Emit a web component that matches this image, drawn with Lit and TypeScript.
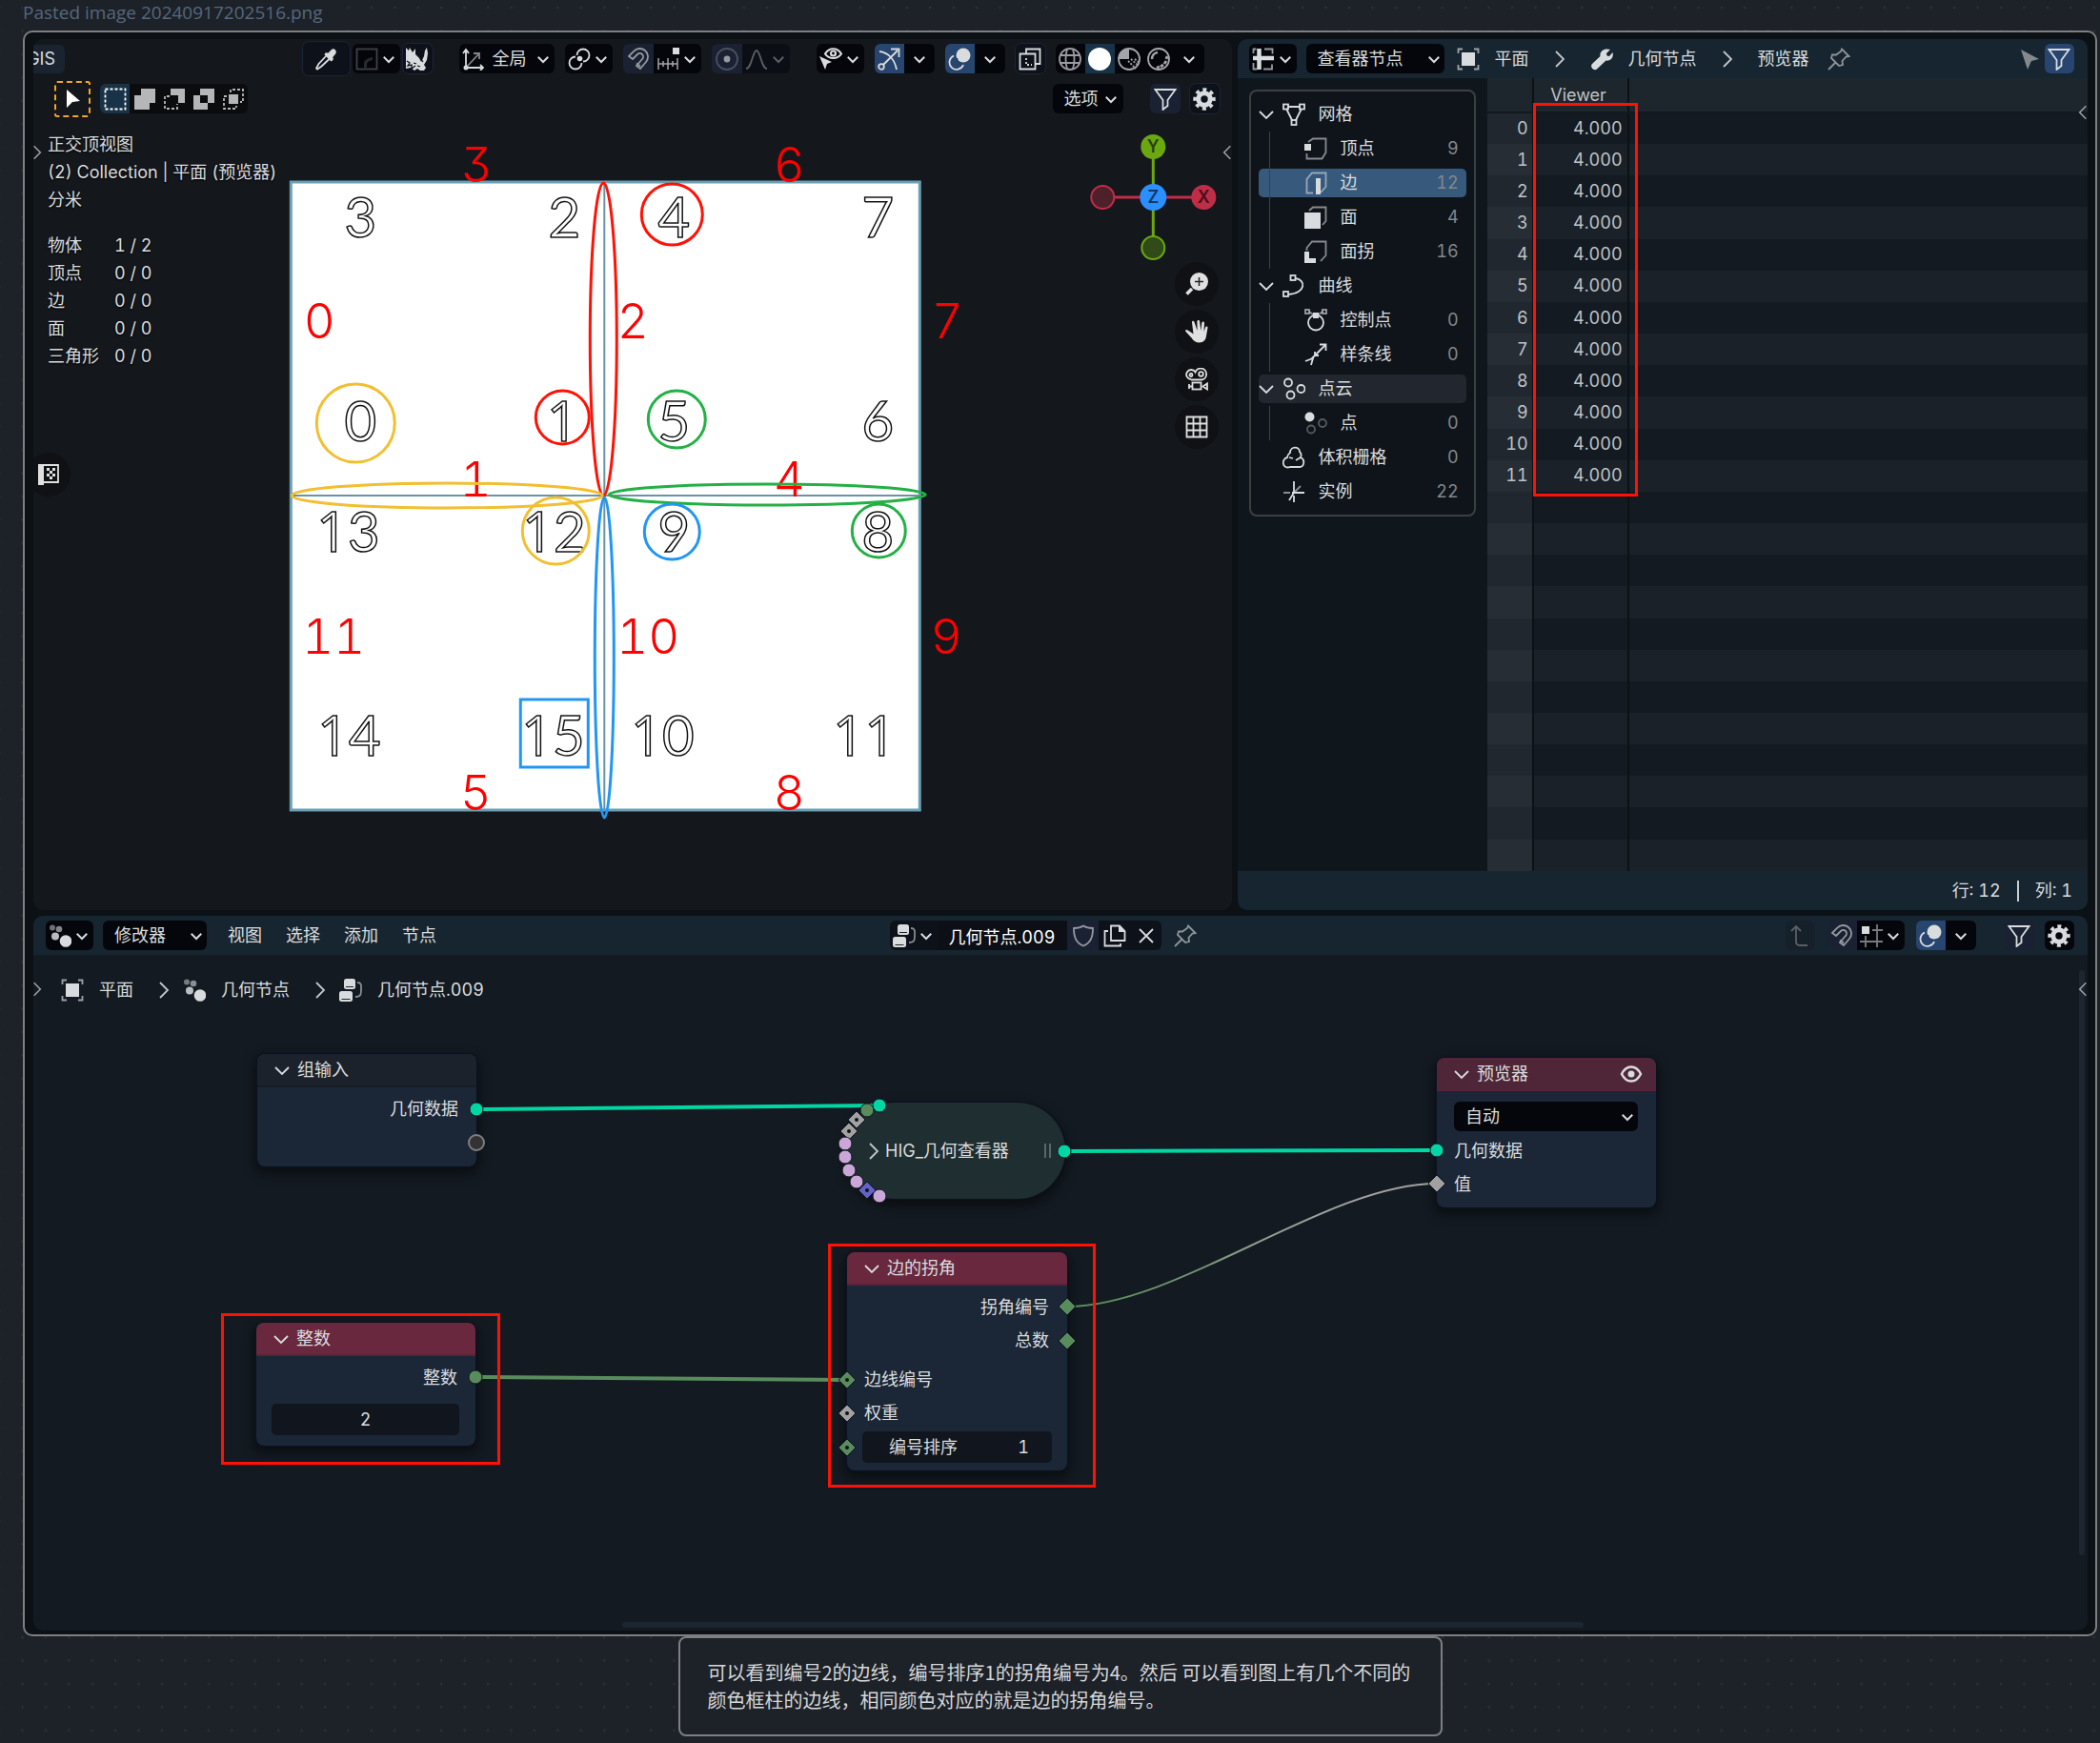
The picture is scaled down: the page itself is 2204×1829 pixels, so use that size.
import { LitElement, html, svg, css, nothing } from "lit";
import { customElement } from "lit/decorators.js";
import { classMap } from "lit/directives/class-map.js";
import { styleMap } from "lit/directives/style-map.js";

/* ---------- icons, each on a 24 x 24 grid ---------- */

const ICONS: Record<string, unknown> = {
  down: svg`<path d="M5 9l7 7 7-7"/>`,
  right: svg`<path d="M8 4l8 8-8 8"/>`,
  left: svg`<path d="M16 4l-8 8 8 8"/>`,
  dropper: svg`<path class="f" d="M11 6l2-1 1 1 4-4c2-2 6 1 4.500 4L19 10.500l1 1-1 2-1.500 1-7-7z"/><path d="M12 9L4.500 17 2 21.500 3 22.500 7 20l8.500-8"/>`,
  falloffBox: svg`<g opacity=".28"><rect x="1.500" y="1.500" width="21" height="21"/><path class="f" d="M9 21v-4c0-4 4-6 9-7v3c-4 1-6 2-6 5v3z" opacity=".6"/></g>`,
  splash: svg`<path class="f" d="M0 0l3 3 1-3 3 5 3-4 0 6 4 4 2 4 3-6 1-6 2-3 1 6-1 7-3 5 2 3-2 3-4 0-3-2-3 2-4-3-5 1z"/><path d="M1 14l3 2-2 3 4-1 0 4 4-3M8 16l3 1M12 19l3 1M16 12l2 3" stroke="#0b0f18" stroke-width="1.300"/>`,
  axes: svg`<path d="M4 21V3M1 6l3-4 3 4M4 21h18M19 18l3 3-3 3"/><path d="M5 20L18 6M12 6h6v6" opacity=".6"/><circle class="f" cx="4" cy="21" r="2.500"/>`,
  pivot: svg`<path d="M9.500 8A6.500 6.500 0 1 1 16 14.500M8 9.500a6.500 6.500 0 1 0 6.500 6.500"/><circle class="f" cx="12.500" cy="11.500" r="2.800"/>`,
  magnet: svg`<path d="M2 9l5-5a8.500 8.500 0 0 1 13 11l-6 7-4-3 6-7a3.500 3.500 0 0 0-5-5l-5 5z"/><path d="M10 16.500l4 3"/>`,
  snapInc: svg`<path d="M2 11v12M7 14v6M12 11v12M17 14v6M22 11v12M2 17h20" stroke-width="1.500" opacity=".75"/><rect class="f" x="17" y="0" width="7" height="7"/>`,
  propEdit: svg`<circle cx="12" cy="12" r="11" opacity=".4"/><circle class="f" cx="12" cy="12" r="3.400"/>`,
  bell: svg`<path d="M1 22c6 0 7-19 11-19s5 19 11 19"/>`,
  eyeCursor: svg`<path d="M6 6.500c4-7 13-7 17 0-4 6-13 6-17 0z" stroke-width="2.200"/><circle cx="14.500" cy="6" r="2.500" stroke-width="2.200"/><path class="f" d="M0 9l13 6-5 2-2 6z"/>`,
  gizmo: svg`<path d="M2 4c9 1 16 8 18 19M6 18L21 3M14 1.500h8.500V10"/><circle cx="4" cy="20" r="2.800"/>`,
  overlay: svg`<circle class="f" cx="16" cy="8" r="7.500"/><path d="M6 8.500a7.500 7.500 0 1 0 10 9.500"/><path d="M9 11a6 6 0 0 0 5 6" stroke="#26436b" stroke-width="2.500"/><path class="f" d="M11 11h3v3h-3z"/>`,
  xray: svg`<path d="M8 6V1.500h14.500V17H18M1.500 6.500h16v16h-16z"/><path d="M8 11v7h6" stroke-dasharray="2 2"/>`,
  wire: svg`<g opacity=".7"><circle cx="12" cy="12" r="11"/><path d="M9 1.500c-2 7-2 14 0 21M15 1.500c2 7 2 14 0 21M2 8h20M2 16h20"/></g>`,
  solid: svg`<circle class="f" cx="12" cy="12" r="12"/>`,
  material: svg`<g opacity=".75"><circle cx="12" cy="12" r="11"/><path class="f" d="M12 12V1A11 11 0 0 0 1 12z"/><path d="M11 14l8 8M14 12l8 7M18 12l5 4" stroke-dasharray="2 1.500"/></g>`,
  render: svg`<g opacity=".75"><circle cx="12" cy="12" r="11"/><path d="M5 12a7 7 0 0 1 6-7" stroke-width="2.600"/><path d="M10 21l3-1M14 20l3-2M18 17l2-3M20 12l1-3" stroke-width="2.800"/></g>`,
  funnel: svg`<path d="M1.500 2h21l-8 11v6l-5 4V13z"/>`,
  gear: svg`<circle cx="12" cy="12" r="6.200" stroke-width="5"/><circle cx="12" cy="12" r="9.800" stroke-width="3.800" stroke-dasharray="3.850 3.850" transform="rotate(-11.250 12 12)"/>`,
  cursor: svg`<path class="f" d="M6 2l14 12-8 1-6 6z"/>`,
  pointer: svg`<path class="f" d="M3 2l19 10-8 2-4 9z"/>`,
  selSet: svg`<rect x="1.500" y="1.500" width="21" height="21" stroke-dasharray="3 2"/>`,
  selAdd: svg`<path class="f" d="M8 1h15v15h-6v7H1V8h7z"/>`,
  selSub: svg`<path class="f" d="M8 1h15v15h-7V8H8z"/><path d="M7 9H2v13h13v-5" stroke-dasharray="3 2"/>`,
  selDiff: svg`<path class="f" fill-rule="evenodd" d="M8 1h15v15h-7v7H1V8h7zM8 8v8h8V8z"/>`,
  selAnd: svg`<rect class="f" x="7" y="7" width="10" height="10"/><path d="M9 5V2h13v13h-3M5 9H2v13h13v-3" stroke-dasharray="3 2"/>`,
  zoomIn: svg`<circle class="f" cx="14.500" cy="9.500" r="9.500"/><path d="M7 17l-5.500 5.500" stroke-width="3.500"/><path d="M14.500 5v9M10 9.500h9" stroke="#222" stroke-width="1.500"/>`,
  hand: svg`<path class="f" d="M5 12l-3.500-2C0 10 0 11 .5 12l6 6.500c2 3.500 5 5 8 5 5 0 7-3 7.500-7L23.500 8c.2-2-2-2-2.500-.3L19.500 12 20 3c0-2-2.400-2-2.700 0l-.9 8L15 1c-.2-1.500-2.600-1.500-2.600.3l.2 9.700L9.700 2.500C9-.2 6.700.5 7 2.500l1.500 12z"/>`,
  movie: svg`<path d="M6 12a5 5 0 1 1 4.500-7.500A6 6 0 1 1 17 12.500H6"/><circle cx="6" cy="7.500" r="1.500"/><circle cx="16.500" cy="6.500" r="2.300"/><rect x="7.500" y="15.500" width="9" height="7"/><path d="M4 17v5M4 19.500h3M23 16.500v6l-4.500-3z"/>`,
  grid: svg`<path d="M1.500 1.500h21v21h-21zM8.500 1.500v21M15.500 1.500v21M1.500 8.500h21M1.500 15.500h21"/>`,
  flag: svg`<path class="f" d="M1 1h6v22H1z"/><path d="M2 2h20v18H7"/><path class="f" d="M10 5h3v3h-3zM16 5h3v3h-3zM13 8h3v3h-3zM10 11h3v3h-3zM16 11h3v3h-3zM13 14h3v3h-3z"/>`,
  sheet: svg`<path d="M7.500 1v22M1 11h22" stroke-width="4.500"/><path d="M13 1.500h8.500v5M12 22.500h9v-5M1.500 16v6.500h4M1.500 6V1.500h3" opacity=".7"/>`,
  object: svg`<rect class="f" x="5" y="5" width="14" height="14"/><path d="M1.500 6V1.500H6M18 1.500h4.500V6M22.500 18v4.500H18M6 22.500H1.500V18" opacity=".7"/>`,
  wrench: svg`<path class="f" d="M21 2l-4 4 .5 2.500 2.500.5 3.500-4c1.500 5-2 9.500-7 8.500L7 22.500C4 25-1 20 2 17l8.500-8C9.500 3.500 15 0 21 2z"/>`,
  pin: svg`<path d="M15 1.500l7.500 7.500-3 .5-4 4.500.5 4-4 1-8-8 1-3.500h4l5-3.500zM8 16l-7 7"/>`,
  mesh: svg`<path d="M5 4h14M4 6l6.500 13M20 6l-6.500 13"/><rect x="1" y="1.500" width="5" height="5"/><rect x="18" y="1.500" width="5" height="5"/><rect x="9.500" y="18" width="5" height="5"/>`,
  vert: svg`<path d="M4 5l5-3.500h13.500V16l-4 6.500h-16V17" opacity=".6"/><rect class="f" x="0" y="7" width="7" height="7"/>`,
  edge: svg`<path d="M9 22.500H2.500V8L8 1.500h14.500V16L17 22" opacity=".6"/><rect class="f" x="12" y="7" width="5" height="17"/>`,
  face: svg`<path d="M5 5l4-3.500h13.500V16L19 20" opacity=".6"/><rect class="f" x="0" y="7" width="17" height="17"/>`,
  corner: svg`<path d="M2.500 11V8L8 1.500h14.500V16L17 22" opacity=".6"/><path class="f" d="M0 12h5v7h7v5H0z"/>`,
  curve: svg`<path d="M13 4c12 1 12 16-7 17"/><rect x="8.500" y="1" width="5" height="5"/><rect x="1" y="18" width="5" height="5"/>`,
  control: svg`<circle cx="12" cy="14.500" r="8"/><path d="M5 3l4 3M19 3l-4 3" opacity=".6"/><rect x="1" y="1" width="4" height="4" opacity=".7"/><rect x="19" y="1" width="4" height="4" opacity=".7"/><rect class="f" x="9" y="4" width="6" height="6"/>`,
  spline: svg`<path d="M22 2L7 17M16 1.500h6.500V8M1 19l8-3-2 7M11 9v4h4"/>`,
  cloud: svg`<circle cx="6" cy="5.500" r="4"/><circle cx="19.500" cy="12" r="4"/><circle cx="8.500" cy="18.500" r="4"/>`,
  point: svg`<circle class="f" cx="5.500" cy="5.500" r="5"/><g opacity=".35"><circle cx="19" cy="12" r="4"/><circle cx="7" cy="18.500" r="4"/></g>`,
  volume: svg`<path d="M5 12c0-3 2-4 3-5 0-7 10-7 10-1 3 3 1 5 1 6 5 2 4 10-1 10H8c-9 3-9-9-3-10z"/><path d="M7 12l4 1M14 15l5-3"/>`,
  instance: svg`<path d="M12 1v12l-5 8M10 13h13M12 16v7"/><path d="M12 13l7-7M1 13h7M12 12" opacity=".6"/>`,
  geo: svg`<circle class="f" cx="4" cy="3.500" r="3" opacity=".5"/><circle class="f" cx="11" cy="5" r="3.300" opacity=".6"/><circle class="f" cx="7" cy="12.500" r="4" opacity=".85"/><circle class="f" cx="18" cy="17.500" r="6.300"/>`,
  tree: svg`<rect class="f" x="5" y="0" width="12" height="11" rx="2.500"/><rect class="f" x="0" y="13" width="14" height="11" rx="2.500"/><path d="M7 8.500h8M2.500 21.500h9" stroke="#222" stroke-width="1.200"/><path d="M19 4c5 0 4 4 4 8s0 7-6 7" opacity=".6"/>`,
  shield: svg`<path d="M12 1.500c3 2 7 2.500 10 2.500 0 9-2 15-10 18.500C4 19 2 13 2 4c3 0 7-.5 10-2.500z"/>`,
  copy: svg`<path d="M8 1.500h9l5.500 5.500v10H8zM5 7H1.500v15.500H18V20"/><path class="f" d="M16 1l7 7h-7z"/>`,
  cross: svg`<path d="M5 5l14 14M19 5L5 19"/>`,
  up: svg`<path d="M3 7l5-5 5 5M8 2v16c0 3 1 4 4 4h8"/>`,
  snapGrid: svg`<path d="M18 0v24M6 12v12M0 18h24M13 6h11" opacity=".55"/><rect class="f" x="2" y="2" width="8" height="8"/>`,
  eye: svg`<path d="M2 12c5-10 15-10 20 0-5 10-15 10-20 0z" stroke-width="2.500"/><circle class="f" cx="12" cy="12" r="3.500"/>`,
};

const icon = (name: string, size = "") =>
  html`<svg class="ico ${size}" viewBox="0 0 24 24" aria-hidden="true">${ICONS[name]}</svg>`;

const shared = css`
  :host {
    display: block;
    min-width: 0;
    min-height: 0;
    font: 18px/28px Inter, "Noto Sans CJK SC", sans-serif;
    font-feature-settings: "tnum";
    color: #d9dcde;
  }
  * { box-sizing: border-box; }
  button, input, select {
    font: inherit;
    font-feature-settings: inherit;
    color: inherit;
    border: 0;
    margin: 0;
    padding: 0;
    background: none;
    outline: none;
  }
  .ico {
    width: 24px;
    height: 24px;
    flex: none;
    fill: none;
    stroke: currentColor;
    stroke-width: 1.8;
  }
  .ico .f { fill: currentColor; stroke: none; }
  .ico.sm { width: 18px; height: 18px; stroke-width: 2.6; }
  .ico.arrow { color: #c3c6c8; }
  .cluster, .group, .btn { display: flex; align-items: center; }
  .cluster { gap: 10px; }
  .btn {
    height: 31px;
    min-width: 31px;
    justify-content: center;
    gap: 2px;
    padding: 0 3px;
    background: #04060b;
    border-radius: 6px;
    white-space: nowrap;
  }
  .group { border-radius: 6px; overflow: hidden; }
  .group .btn { border-radius: 0; }
  .btn.more { min-width: 32px; }
  .btn.on { background: #27456e; }
  .btn.teal { background: #183348; color: #fff; }
  .btn.dim { min-width: 32px; background: #1a2132; color: #96999f; }
  .btn.lit { color: #d9dcde; }
  .btn.faint { background: #0b0e14; color: #5b5f66; }
  .btn.line { background: #0d1119; box-shadow: 0 0 0 1px #1b2436; }
  .pick { position: relative; display: flex; align-items: center; background: #04060b; border-radius: 6px; height: 31px; }
  .pick select { appearance: none; width: 100%; height: 100%; padding: 0 28px 0 12px; }
  .pick .ico { position: absolute; right: 2px; pointer-events: none; }
  .tab {
    position: absolute;
    display: flex;
    align-items: center;
    justify-content: center;
    width: 12px;
    height: 24px;
  }
  .tab .ico { width: 20px; height: 20px; color: #a0a3a6; }
  .tab.l { left: -2px; }
  .tab.r { right: -1px; }
`;

const drop = (name: string, label: string, cls = "") =>
  html`<button class="btn ${cls}" aria-label=${label}>${icon(name)}${icon("down", "sm")}</button>`;
const tool = (name: string, label: string, cls = "") =>
  html`<button class="btn ${cls}" aria-label=${label}>${icon(name)}</button>`;
const more = (label: string) =>
  html`<button class="btn more" aria-label=${label}>${icon("down", "sm")}</button>`;

/* ---------- 3D viewport ---------- */

const CORNERS: [string, number, number][] = [
  ["3", 378, 249], ["2", 592, 249], ["4", 707, 249], ["7", 921, 249],
  ["0", 378, 463], ["1", 590, 463], ["5", 707, 463], ["6", 921, 463],
  ["13", 365, 579], ["12", 581, 579], ["9", 707, 579], ["8", 921, 579],
  ["14", 366, 793], ["15", 580, 793], ["10", 695, 793], ["11", 907, 793],
];
const EDGES: [string, number, number][] = [
  ["3", 500, 191], ["6", 828, 191], ["0", 335, 355], ["2", 664, 355], ["7", 994, 355],
  ["1", 499, 521], ["4", 828, 521], ["11", 350, 686], ["10", 680, 686], ["9", 993, 686],
  ["5", 499, 850], ["8", 828, 850],
];
const RINGS: [string, number, number, number, number][] = [
  ["red", 633, 356, 14, 164], ["red", 705, 225, 32, 32], ["red", 590, 438, 28, 28],
  ["yellow", 373, 444, 41, 41], ["yellow", 469, 520, 163, 13], ["yellow", 583, 557, 35, 35],
  ["green", 710, 440, 30, 30], ["green", 805, 519, 166, 11], ["green", 922, 557, 28, 28],
  ["blue", 705, 558, 29, 29], ["blue", 634, 690, 10, 168],
];
const STATS = [["物体", "1 / 2"], ["顶点", "0 / 0"], ["边", "0 / 0"], ["面", "0 / 0"], ["三角形", "0 / 0"]];

@customElement("mesh-viewport")
class MeshViewport extends LitElement {
  static styles = [shared, css`
    :host { position: relative; background: #14171c; border-radius: 10px; overflow: hidden; }
    .scene { position: absolute; inset: 0; width: 100%; height: 100%; }
    .plane { fill: #fff; stroke: #6a9fb4; stroke-width: 3; }
    .seam { stroke: #6a93a6; stroke-width: 2; }
    .corner { font: 400 58px Lato, sans-serif; fill: #fff; stroke: #111; stroke-width: 1.5; text-anchor: middle; }
    .corner .one { font-family: "Open Sans", sans-serif; }
    .edge { font: 300 51px Inter, sans-serif; font-feature-settings: "tnum", "cv09"; fill: #f00; text-anchor: middle; }
    .ring { fill: none; stroke-width: 3; }
    .red { stroke: #ff1205; }
    .yellow { stroke: #f2bf31; }
    .green { stroke: #23b045; }
    .blue { stroke: #2196f3; }
    .axis { font: 600 18px Inter, sans-serif; text-anchor: middle; }
    .bar { position: relative; display: flex; align-items: center; padding-right: 29px; gap: 28px; height: 41px; }
    .bar .cluster { gap: 11px; }
    .bar .cluster.tight { gap: 3px; }
    .bar .first { flex: 1; display: flex; }
    .gis { width: 33px; height: 30px; background: #1a2430; border-radius: 0 6px 6px 0; display: flex; justify-content: flex-end; padding-right: 10px; overflow: hidden; }
    .wide { width: 49px; height: 35px; }
    .named { gap: 8px; padding: 0 3px; }
    .tools { position: relative; display: flex; align-items: center; height: 43px; padding: 0 13px 0 22px; }
    .active { width: 38px; height: 38px; border: 2px dashed #f2a623; border-radius: 3px; display: grid; place-items: center; color: #fff; }
    .modes { margin-left: 10px; }
    .modes .btn { color: #b4b6b8; background: #0b0c0e; }
    .modes .teal { color: #fff; background: #183348; }
    .opts { margin-left: auto; padding: 0 4px 0 12px; gap: 4px; }
    .right { margin-left: 28px; }
    .info { position: relative; margin: 12px 0 0 15px; line-height: 29px; width: max-content; text-shadow: 0 1px 2px #000; }
    .info p, .info dl { margin: 0; }
    .info dl { margin-top: 19px; display: grid; grid-template-columns: 70px auto; }
    .info dd { margin: 0; }
    .nav { position: absolute; right: 14px; top: 234px; display: grid; gap: 4px; }
    .round { width: 46px; height: 46px; border-radius: 50%; background: #0f1115; display: grid; place-items: center; color: #e0e0e0; }
    .asset { position: absolute; left: -7px; top: 434px; }
    .tab { top: 107px; }
  `];
  render() {
    return html`
      <svg class="scene" viewBox="35 41 1257 914">
        <rect class="plane" x="305" y="191" width="660" height="659" />
        <path class="seam" d="M634 191V850M305 520H965" />
        ${CORNERS.map(([t, x, y]) => svg`<text class="corner" x=${x} y=${y}>${[...t].map(
          (d) => (d === "1" ? svg`<tspan class="one">1</tspan>` : svg`<tspan>${d}</tspan>`))}</text>`)}
        ${EDGES.map(([t, x, y]) => svg`<text class="edge" x=${x} y=${y}>${t}</text>`)}
        ${RINGS.map(([c, x, y, rx, ry]) => svg`<ellipse class="ring ${c}" cx=${x} cy=${y} rx=${rx} ry=${ry}/>`)}
        <rect class="ring blue" x="546" y="734" width="71" height="71" />
        <g stroke-width="3">
          <path d="M1157 207H1263" stroke="#c02d47" />
          <path d="M1210 154V260" stroke="#6ba80f" />
          <circle cx="1157" cy="207" r="12" fill="#4d202b" stroke="#c02d47" stroke-width="2" />
          <circle cx="1210" cy="260" r="12" fill="#304a18" stroke="#6ba80f" stroke-width="2" />
        </g>
        <circle cx="1263" cy="207" r="13" fill="#c02d47" />
        <circle cx="1210" cy="154" r="13" fill="#6ba80f" />
        <circle cx="1210" cy="207" r="14" fill="#2c8fff" />
        <text class="axis" x="1210" y="160" fill="#26400a">Y</text>
        <text class="axis" x="1263" y="213" fill="#4a0f1b">X</text>
        <text class="axis" x="1210" y="213" fill="#12375f">Z</text>
      </svg>
      <div class="bar">
        <div class="first"><button class="btn gis">GIS</button></div>
        <div class="cluster tight">
          ${tool("dropper", "吸管", "line wide")}
          ${drop("falloffBox", "衰减")}
          ${tool("splash", "笔刷", "line")}
        </div>
        <div class="cluster">
          <button class="btn named">${icon("axes")}全局${icon("down", "sm")}</button>
          ${drop("pivot", "轴心点")}
          <div class="group">${tool("magnet", "吸附", "dim")}${drop("snapInc", "吸附到")}</div>
          <div class="group">${tool("propEdit", "衰减编辑", "dim")}${drop("bell", "衰减类型", "faint")}</div>
        </div>
        <div class="cluster">
          ${drop("eyeCursor", "可选性")}
          <div class="group">${tool("gizmo", "操纵器", "on")}${more("操纵器选项")}</div>
          <div class="group">${tool("overlay", "叠加层", "on")}${more("叠加层选项")}</div>
          ${tool("xray", "透视", "line")}
          <div class="group">
            ${tool("wire", "线框")}${tool("solid", "实体", "teal")}${tool("material", "材质")}${tool("render", "渲染")}${more("着色选项")}
          </div>
        </div>
      </div>
      <div class="tools">
        <button class="active" aria-label="选择">${icon("cursor")}</button>
        <div class="group modes">
          ${tool("selSet", "设置", "teal")}${tool("selAdd", "扩展")}${tool("selSub", "减去")}${tool("selDiff", "差集")}${tool("selAnd", "交集")}
        </div>
        <button class="btn opts">选项${icon("down", "sm")}</button>
        <div class="cluster right">${tool("funnel", "过滤", "dim lit")}${tool("gear", "设置", "line")}</div>
      </div>
      <div class="info">
        <p>正交顶视图</p>
        <p>(2) Collection | 平面 (预览器)</p>
        <p>分米</p>
        <dl>${STATS.map(([k, v]) => html`<dt>${k}</dt><dd>${v}</dd>`)}</dl>
      </div>
      <div class="nav">
        ${[["zoomIn", "缩放"], ["hand", "平移"], ["movie", "相机"], ["grid", "正交"]].map(
          ([n, l]) => html`<button class="round" aria-label=${l}>${icon(n)}</button>`)}
      </div>
      <button class="round asset" aria-label="资产">${icon("flag")}</button>
      <button class="tab l" aria-label="展开工具栏">${icon("right", "arrow")}</button>
      <button class="tab r" aria-label="展开侧栏">${icon("left", "arrow")}</button>
    `;
  }
}

/* ---------- spreadsheet ---------- */

interface Domain { icon: string; name: string; count?: number; open?: boolean; child?: boolean; state?: string }
const DOMAINS: Domain[] = [
  { icon: "mesh", name: "网格", open: true },
  { icon: "vert", name: "顶点", count: 9, child: true },
  { icon: "edge", name: "边", count: 12, child: true, state: "active" },
  { icon: "face", name: "面", count: 4, child: true },
  { icon: "corner", name: "面拐", count: 16, child: true },
  { icon: "curve", name: "曲线", open: true },
  { icon: "control", name: "控制点", count: 0, child: true },
  { icon: "spline", name: "样条线", count: 0, child: true },
  { icon: "cloud", name: "点云", open: true, state: "hover" },
  { icon: "point", name: "点", count: 0, child: true },
  { icon: "volume", name: "体积栅格", count: 0 },
  { icon: "instance", name: "实例", count: 22 },
];

@customElement("data-sheet")
class DataSheet extends LitElement {
  static styles = [shared, css`
    :host { position: relative; display: grid; grid-template-rows: 41px minmax(0, 1fr) 41px; background: #172530; border-radius: 10px; overflow: hidden; }
    header { display: flex; align-items: center; padding: 0 14px 0 12px; }
    .pick { width: 145px; margin: 0 13px 0 10px; }
    .crumbs { display: flex; align-items: center; gap: 16px; flex: 1; }
    .crumbs .arrow { margin: 0 4px; }
    .crumbs .pin { color: #8f9498; display: flex; margin-left: 3px; }
    .ghost { color: #84898d; background: none; }
    .body { display: grid; grid-template-columns: 262px minmax(0, 1fr); min-height: 0; }
    .side { background: #0f171d; padding: 12px; }
    .domains { margin: 0; padding: 9px 8px; list-style: none; border: 2px solid #3c3f42; border-radius: 8px; background: #0f141b; display: grid; gap: 6px; }
    .domains li { position: relative; }
    .row { display: flex; align-items: center; width: 100%; height: 30px; border-radius: 5px; padding: 0 8px 0 0; gap: 14px; }
    .row .fold { width: 16px; margin-right: -5px; display: flex; justify-content: center; }
    .row.child { padding-left: 48px; }
    .row.active { background: #375a7c; }
    .row.hover { background: #22272f; }
    .count { margin-left: auto; color: #83878b; }
    .guide { position: absolute; left: 11px; top: -3px; width: 1px; height: 36px; background: #39414a; }
    .sheet { display: grid; min-height: 0; background: #131a21; }
    table { width: 100%; height: 100%; border-collapse: collapse; table-layout: fixed; }
    .c0 { width: 48px; }
    .c1 { width: 100px; }
    th, td { padding: 0; line-height: 24px; text-align: right; font-weight: 400; color: #bfc3c6; }
    thead tr { height: 36px; background: #1e262d; }
    thead th { border-bottom: 2px solid #12191f; }
    .c1h { text-align: center; padding: 0 4px 0 0; }
    tbody tr { height: 33px; }
    tbody th { background: #20272e; padding-right: 4px; }
    tbody tr:nth-child(even) { background: #1a2128; }
    tbody tr:nth-child(even) th { background: #262d35; }
    tr > :nth-child(-n + 2) { border-right: 2px solid #0c1116; }
    tbody td:nth-child(2) { padding-right: 5px; }
    footer { display: flex; align-items: center; justify-content: flex-end; padding-right: 16px; gap: 17px; }
    .rule { width: 2px; height: 22px; background: #c9cccf; }
    .mark { position: absolute; left: 310px; top: 67px; width: 110px; height: 413px; border: 3px solid #ff1205; }
    .tab { top: 65px; }
  `];
  render() {
    return html`
      <header>
        ${drop("sheet", "编辑器类型")}
        <label class="pick"><select aria-label="数据源"><option>查看器节点</option></select>${icon("down", "sm")}</label>
        <div class="crumbs">
          ${icon("object")}<span>平面</span>${icon("right", "arrow")}${icon("wrench")}<span>几何节点</span>${icon("right", "arrow")}<span>预览器</span>
          <button class="pin" aria-label="固定">${icon("pin")}</button>
        </div>
        ${tool("pointer", "仅选中项", "ghost")}${tool("funnel", "过滤", "on")}
      </header>
      <div class="body">
        <div class="side">
          <ul class="domains">
            ${DOMAINS.map((d) => html`<li>
              <button class=${classMap({ row: true, child: !!d.child, active: d.state === "active", hover: d.state === "hover" })}>
                ${d.child ? nothing : html`<span class="fold">${d.open ? icon("down") : nothing}</span>`}
                ${icon(d.icon)}<span>${d.name}</span>
                ${d.count === undefined ? nothing : html`<span class="count">${d.count}</span>`}
              </button>
              ${d.child ? html`<span class="guide"></span>` : nothing}
            </li>`)}
          </ul>
        </div>
        <div class="sheet">
          <table>
            <colgroup><col class="c0" /><col class="c1" /><col /></colgroup>
            <thead><tr><th></th><th class="c1h" scope="col">Viewer</th><th></th></tr></thead>
            <tbody>
              ${Array.from({ length: 24 }, (_, i) => html`<tr>
                <th scope="row">${i < 12 ? i : nothing}</th><td>${i < 12 ? "4.000" : nothing}</td><td></td>
              </tr>`)}
            </tbody>
          </table>
        </div>
      </div>
      <footer><span>行: 12</span><span class="rule"></span><span>列: 1</span></footer>
      <div class="mark"></div>
      <button class="tab r" aria-label="展开侧栏">${icon("left", "arrow")}</button>
    `;
  }
}

/* ---------- node editor ---------- */

const TEAL = "#00d6a3", GREEN = "#598c5c", GREY = "#a1a1a1", PINK = "#cba6d8", INDIGO = "#6363c7";
interface Socket { x: number; y: number; c: string; kind?: "diamond" | "field" }
const SOCKETS: Socket[] = [
  { x: 465, y: 162, c: TEAL }, { x: 888, y: 158, c: TEAL }, { x: 875, y: 163, c: GREEN },
  { x: 864, y: 173, c: GREY, kind: "field" }, { x: 856, y: 185, c: GREY, kind: "field" },
  { x: 852, y: 198, c: PINK }, { x: 852, y: 212, c: PINK }, { x: 856, y: 226, c: PINK }, { x: 864, y: 238, c: PINK },
  { x: 875, y: 247, c: INDIGO, kind: "field" }, { x: 888, y: 253, c: PINK },
  { x: 1082, y: 206, c: TEAL }, { x: 1473, y: 205, c: TEAL }, { x: 1473, y: 240, c: GREY, kind: "diamond" },
  { x: 464, y: 443, c: GREEN }, { x: 1085, y: 369, c: GREEN, kind: "diamond" }, { x: 1085, y: 405, c: GREEN, kind: "diamond" },
  { x: 854, y: 446, c: GREEN, kind: "field" }, { x: 854, y: 481, c: GREY, kind: "field" }, { x: 854, y: 517, c: GREEN, kind: "field" },
];
const at = (x: number, y: number, w: number, h: number) =>
  styleMap({ left: `${x}px`, top: `${y}px`, width: `${w}px`, height: `${h}px` });

@customElement("node-editor")
class NodeEditor extends LitElement {
  static styles = [shared, css`
    :host { position: relative; display: grid; grid-template-rows: 41px minmax(0, 1fr); background: #131a21; border-radius: 10px; overflow: hidden; }
    header { display: grid; grid-template-columns: 1fr auto 1fr; align-items: center; background: #172530; padding: 0 14px 0 13px; }
    .pick.mode { width: 109px; margin-right: 12px; }
    .menu { margin-right: 15px; height: 30px; }
    .mid { padding-right: 34px; }
    .mid .pin { color: #8f9498; display: flex; margin-left: 3px; }
    .mid .btn { background: #0d1119; min-width: 33px; }
    .mid .btn.dim { background: #1a2132; }
    .name { width: 136px; height: 31px; padding: 0 10px 0 11px; background: #0c0f16; color: #fff; }
    .end { justify-content: flex-end; gap: 12px; }
    .end .faint { background: #15202a; }
    .gap { margin-left: 17px; gap: 11px; }
    .canvas { position: relative; overflow: hidden; }
    .path { display: flex; align-items: center; gap: 16px; height: 28px; padding: 0; margin: 23px 0 0 29px; }
    .path .arrow { margin: 0 -8px 0 4px; }
    .node { position: absolute; border-radius: 8px; background: #1b2636; box-shadow: 0 0 0 1px #0a1122, 0 5px 12px 3px rgba(0, 0, 0, 0.45); }
    .head { display: flex; align-items: center; gap: 4px; height: 35px; padding: 0 14px; border-radius: 8px 8px 0 0; background: #1c222b; border-bottom: 2px solid #191c24; }
    .head.view { background: #4f2637; border-color: #5b2237; }
    .head.input { background: #69283e; border-color: #5b2237; }
    .head .last { margin-left: auto; display: flex; }
    .io { height: 35px; display: flex; align-items: center; padding: 0 19px 0 18px; }
    .io.out { justify-content: flex-end; }
    .ins { padding-top: 6px; }
    .outs { padding-top: 5px; }
    .pad { padding: 11px 19px 3px 18px; }
    .field { display: flex; align-items: center; height: 33px; margin: 2px 16px; background: #11151e; border-radius: 5px; padding: 0 24px 0 28px; }
    .field input { width: 100%; min-width: 0; text-align: right; }
    .field.solo { padding: 0; margin: 10px 17px 0 16px; }
    .field.solo input { text-align: center; }
    .field span { flex: none; }
    .pill { border-radius: 51px; background: #1f2e30; display: flex; align-items: center; gap: 0; padding: 0 15px 0 17px; }
    .grip { margin-left: auto; width: 7px; height: 15px; border: solid #59666a; border-width: 0 2px; }
    .wires { position: absolute; inset: 0; width: 100%; height: 100%; pointer-events: none; }
    .wire { fill: none; stroke-width: 4; }
    .thin { stroke-width: 2; }
    .mark { position: absolute; border: 3px solid #ff1205; pointer-events: none; }
    .tab { top: 24px; }
    .vscroll { position: absolute; right: 3px; top: 16px; bottom: 79px; width: 6px; border-radius: 3px; background: #1c2630; }
    .hscroll { position: absolute; left: 618px; right: 529px; bottom: 3px; height: 6px; border-radius: 3px; background: #1c2630; }
  `];
  socket(s: Socket) {
    if (!s.kind) return svg`<circle cx=${s.x} cy=${s.y} r="7" fill=${s.c} stroke="#0f1720" stroke-width="1"/>`;
    return svg`<path d="M${s.x} ${s.y - 9}l9 9-9 9-9-9z" fill=${s.c} stroke="#0f1720" stroke-width="1"/>
      ${s.kind === "field" ? svg`<circle cx=${s.x} cy=${s.y} r="2" fill="#111"/>` : nothing}`;
  }
  head(title: string, cls = "", last: unknown = nothing) {
    return html`<div class="head ${cls}">${icon("down")}<span>${title}</span>${last}</div>`;
  }
  render() {
    return html`
      <header>
        <div class="cluster">
          ${drop("geo", "编辑器类型")}
          <label class="pick mode"><select aria-label="节点树类型"><option>修改器</option></select>${icon("down", "sm")}</label>
          ${["视图", "选择", "添加", "节点"].map((m) => html`<button class="menu">${m}</button>`)}
        </div>
        <div class="cluster mid">
          <div class="group">
            ${drop("tree", "浏览节点组")}
            <input class="name" aria-label="名称" value="几何节点.009" />
            ${tool("shield", "伪用户", "dim")}${tool("copy", "新建副本")}${tool("cross", "断开")}
          </div>
          <button class="pin" aria-label="固定">${icon("pin")}</button>
        </div>
        <div class="cluster end">
          ${tool("up", "上一级", "faint")}
          <div class="group">${tool("magnet", "吸附", "dim")}${drop("snapGrid", "吸附到")}</div>
          <div class="group">${tool("overlay", "叠加层", "on")}${more("叠加层选项")}</div>
          <div class="cluster gap">${tool("funnel", "过滤", "dim lit")}${tool("gear", "设置")}</div>
        </div>
      </header>
      <div class="canvas">
        <nav class="path">
          ${icon("object")}<span>平面</span>${icon("right", "arrow")}${icon("geo")}<span>几何节点</span>${icon("right", "arrow")}${icon("tree")}<span>几何节点.009</span>
        </nav>

        <section class="node" style=${at(235, 104, 230, 118)}>
          ${this.head("组输入")}
          <div class="outs"><div class="io out">几何数据</div></div>
        </section>

        <section class="node pill" style=${at(853, 155, 230, 101)}>
          ${icon("right", "arrow")}<span>HIG_几何查看器</span><span class="grip"></span>
        </section>

        <section class="node" style=${at(1473, 108, 230, 157)}>
          ${this.head("预览器", "view", html`<button class="last" aria-label="激活">${icon("eye")}</button>`)}
          <div class="pad"><label class="pick"><select aria-label="域"><option>自动</option></select>${icon("down", "sm")}</label></div>
          <div class="io">几何数据</div>
          <div class="io">值</div>
        </section>

        <section class="node" style=${at(854, 312, 231, 229)}>
          ${this.head("边的拐角", "input")}
          <div class="outs"><div class="io out">拐角编号</div><div class="io out">总数</div></div>
          <div class="ins">
            <div class="io">边线编号</div>
            <div class="io">权重</div>
            <label class="field"><span>编号排序</span><input value="1" /></label>
          </div>
        </section>

        <section class="node" style=${at(234, 386, 230, 129)}>
          ${this.head("整数", "input")}
          <div class="outs"><div class="io out">整数</div></div>
          <div class="field solo"><input aria-label="整数" value="2" /></div>
        </section>

        <svg class="wires">
          <defs>
            <linearGradient id="fade"><stop offset="0.100" stop-color=${GREEN} /><stop offset="0.700" stop-color=${GREY} /></linearGradient>
          </defs>
          <path class="wire" d="M465 162L888 158" stroke=${TEAL} />
          <path class="wire" d="M1082 206L1473 205" stroke=${TEAL} />
          <path class="wire" d="M464 443L854 446" stroke=${GREEN} />
          <path class="wire thin" d="M1085 369C1201 369 1357 240 1473 240" stroke="url(#fade)" />
          ${SOCKETS.map((s) => this.socket(s))}
          <circle cx="465" cy="197" r="8" fill="#333" stroke="#7f7f7f" stroke-width="2" />
        </svg>
        <div class="mark" style=${at(197, 376, 293, 159)}></div>
        <div class="mark" style=${at(834, 303, 281, 256)}></div>
        <div class="vscroll"></div>
        <div class="hscroll"></div>
        <button class="tab l" aria-label="展开工具栏">${icon("right", "arrow")}</button>
        <button class="tab r" aria-label="展开侧栏">${icon("left", "arrow")}</button>
      </div>
    `;
  }
}

/* ---------- whiteboard page ---------- */

@customElement("app-root")
class AppRoot extends LitElement {
  static styles = css`
    :host { display: block; }
    * { box-sizing: border-box; }
    .board {
      position: relative;
      display: flex;
      flex-direction: column;
      height: 100vh;
      min-height: 1400px;
      padding: 0 3px 7px 24px;
      background: #1d2128;
    }
    .grid { position: absolute; inset: 0; width: 100%; height: 100%; }
    .file {
      position: relative;
      width: max-content;
      height: 32px;
      padding-right: 12px;
      background: #1d2128;
      font: 19px/27px "Open Sans", "Noto Sans", sans-serif;
      color: #54687e;
    }
    .frame {
      position: relative;
      flex: 1;
      min-height: 0;
      display: grid;
      grid-template-columns: minmax(0, 1257fr) minmax(0, 892fr);
      grid-template-rows: minmax(0, 914fr) minmax(0, 750fr);
      gap: 6px;
      padding: 7px 8px 4px 9px;
      border: 2px solid #7f7f7f;
      border-radius: 10px;
      background: #0b1115;
    }
    .frame node-editor { grid-column: 1 / -1; }
    .note {
      position: relative;
      align-self: center;
      width: 802px;
      max-width: 100%;
      height: 105px;
      padding: 21px 0 0 29px;
      border: 2px solid #7f7f7f;
      border-radius: 8px;
      background: #1d2128;
      font: 20px/29px "Noto Sans CJK SC", sans-serif;
      color: #d5d7d9;
      white-space: nowrap;
    }
    .note p { margin: 0; }
  `;
  render() {
    return html`
      <main class="board">
        <svg class="grid" aria-hidden="true">
          <defs>
            <pattern id="dots" x="11.500" y="-4" width="24.430" height="24.430" patternUnits="userSpaceOnUse">
              <rect x="11" y="11" width="2" height="2" fill="#30353b" />
            </pattern>
          </defs>
          <rect width="100%" height="100%" fill="url(#dots)" />
        </svg>
        <div class="file">Pasted image 20240917202516.png</div>
        <div class="frame">
          <mesh-viewport></mesh-viewport>
          <data-sheet></data-sheet>
          <node-editor></node-editor>
        </div>
        <div class="note">
          <p>可以看到编号2的边线，编号排序1的拐角编号为4。然后 可以看到图上有几个不同的</p>
          <p>颜色框柱的边线，相同颜色对应的就是边的拐角编号。</p>
        </div>
      </main>
    `;
  }
}
